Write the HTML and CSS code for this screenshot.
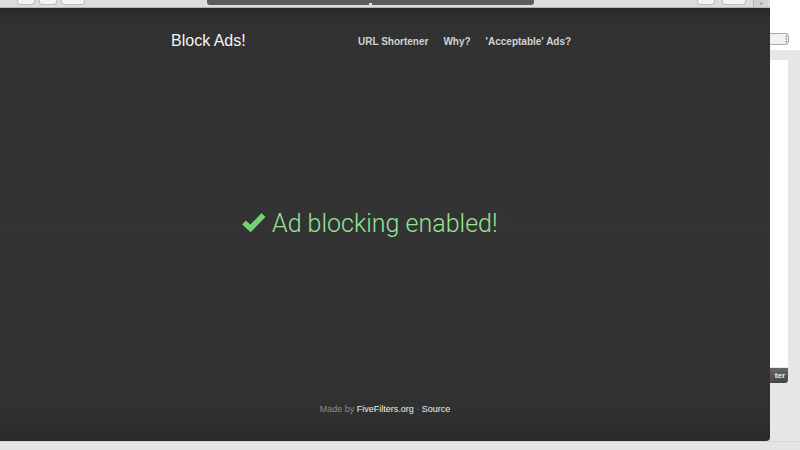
FILE: index.html
```html
<!DOCTYPE html>
<html lang="en">
<head>
    <meta charset="UTF-8">
    <meta name="viewport" content="width=device-width, initial-scale=1.0">
    <title>Block Ads!</title>
    <link rel="stylesheet" href="styles.css">
</head>
<body>

<div class="screen">
    <div class="browser">
        <div class="toolbar">
            <div class="tbGroup left">
                <span class="tbBtn small"></span>
                <span class="tbBtn small"></span>
                <span class="tbBtn wide"></span>
            </div>
            <div class="urlBar"><span class="urlDot"></span></div>
            <div class="tbGroup right">
                <span class="tbBtn small"></span>
                <span class="tbBtn wide"></span>
                <span class="tbBtn plus">+</span>
            </div>
        </div>

        <div class="overlay">
            <div class="header">
                <a class="brand" href="#">Block Ads!</a>
                <nav class="nav">
                    <a href="#">URL Shortener</a>
                    <a href="#">Why?</a>
                    <a href="#">'Acceptable' Ads?</a>
                </nav>
            </div>

            <div class="status">
                <svg class="check" viewBox="0 0 25 20" width="25" height="20">
                    <polyline points="3,10.5 9.5,16.5 22.5,3" fill="none" stroke="currentColor" stroke-width="5.5" stroke-linejoin="miter" stroke-linecap="butt"/>
                </svg>
                <span>Ad blocking enabled!</span>
            </div>

            <div class="credits">
                Made by <a href="#">FiveFilters.org</a> · <a href="#">Source</a>
            </div>
        </div>
    </div>

    <div class="side">
        <div class="sideTop">
            <span class="selectBox">⁝</span>
        </div>
        <div class="sideBody">
            <div class="sideCard"></div>
            <div class="sideBtn">ter</div>
        </div>
    </div>
</div>
<div class="bottomStrip"></div>

</body>
</html>
```

FILE: styles.css
```css
body {
    font-family: 'Liberation Sans', Arial, sans-serif;
    margin: 0;
    padding: 0;
    width: 800px;
    height: 450px;
    overflow: hidden;
    background-color: #e4e4e4;
}

a {
    text-decoration: none;
}

.screen {
    display: flex;
    height: 441px;
}

.browser {
    width: 770px;
    display: flex;
    flex-direction: column;
}

/* browser chrome */
.toolbar {
    height: 7px;
    background-color: #dcdcdc;
    border-bottom: 1px solid #b5b5b5;
    display: flex;
    align-items: flex-start;
    padding: 0 2px 0 17px;
}

.tbGroup {
    display: flex;
    gap: 4px;
    flex-shrink: 0;
}

.tbGroup.left {
    width: 190px;
}

.tbGroup.right {
    margin-left: auto;
    gap: 7px;
}

.tbBtn {
    height: 4px;
    background-color: #f4f4f4;
    border: 1px solid #bdbdbd;
    border-top: none;
    border-radius: 0 0 3px 3px;
}

.tbBtn.small {
    width: 16px;
}

.tbBtn.wide {
    width: 22px;
}

.tbBtn.plus {
    width: 14px;
    height: 7px;
    background-color: #d0d0d0;
    border: none;
    border-left: 1px solid #b5b5b5;
    border-radius: 0;
    font-size: 8px;
    line-height: 7px;
    color: #888;
    text-align: center;
    overflow: hidden;
}

.urlBar {
    width: 327px;
    height: 5px;
    flex-shrink: 0;
    background-color: #5c5c5c;
    border-radius: 0 0 3px 3px;
    display: flex;
    justify-content: center;
    align-items: flex-end;
}

.urlDot {
    width: 3px;
    height: 2px;
    background-color: #ddd;
}

/* dark overlay */
.overlay {
    flex: 1;
    display: flex;
    flex-direction: column;
    background: linear-gradient(#292929, #313131 12px, #333 50%, #313131 400px, #2a2a2a);
    border-radius: 0 0 4px 0;
}

.header {
    display: flex;
    align-items: center;
    padding: 23px 0 0 171px;
    height: 20px;
}

.brand {
    color: #f5f5f5;
    font-size: 16px;
    font-weight: 500;
    width: 187px;
}

.nav {
    display: flex;
    gap: 15px;
}

.nav a {
    color: #d2d2d2;
    font-size: 10px;
    font-weight: 700;
}

.status {
    display: flex;
    align-items: center;
    gap: 6px;
    padding: 158px 0 0 241px;
    color: #93e493;
    font-family: Roboto, 'Liberation Sans', sans-serif;
    font-weight: 300;
    font-size: 25px;
}

.check {
    color: #72d172;
    margin-top: -3px;
}

.credits {
    margin-top: auto;
    padding-bottom: 27px;
    text-align: center;
    font-size: 9px;
    color: #8c8c8c;
}

.credits a {
    color: #eeeeee;
}

/* page behind the overlay */
.side {
    flex: 1;
    display: flex;
    flex-direction: column;
}

.sideTop {
    height: 50px;
    background-color: #ffffff;
    padding-top: 33px;
    box-sizing: border-box;
}

.selectBox {
    display: block;
    width: 17px;
    height: 10px;
    border: 1px solid #a8a8a8;
    border-left: none;
    border-radius: 0 4px 4px 0;
    background-color: #f2f2f2;
    font-size: 9px;
    line-height: 10px;
    text-align: right;
    color: #333;
    padding-right: 1px;
}

.sideBody {
    flex: 1;
    background-color: #e6e6e6;
    padding: 10px 12px 0 0;
}

.sideCard {
    height: 307px;
    background-color: #ffffff;
}

.sideBtn {
    height: 15px;
    margin-top: 1px;
    background: linear-gradient(#666, #444);
    border-radius: 0 0 3px 0;
    color: #f0f0f0;
    font-size: 8px;
    font-weight: 700;
    line-height: 15px;
    text-align: right;
    padding-right: 3px;
}

.bottomStrip {
    height: 9px;
    background-color: #e4e4e4;
    border-top: 1px solid #d6d6d6;
}
```
